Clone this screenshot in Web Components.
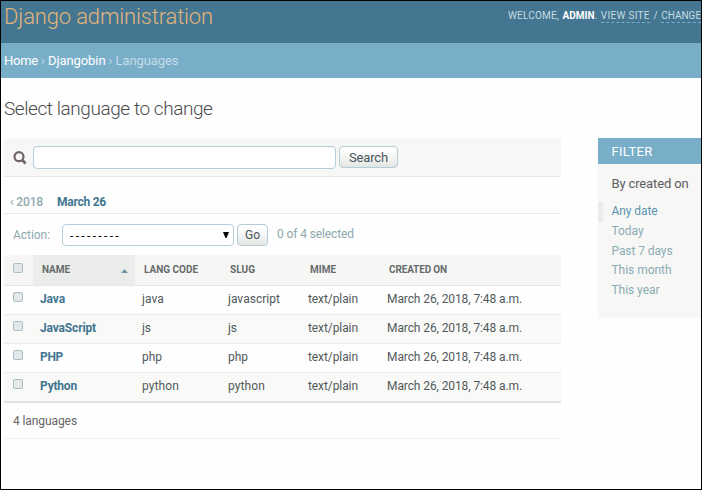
<!DOCTYPE html>
<html lang="en"><head><meta charset="utf-8"><title>Select language to change</title>
<style>
body{margin:0;width:702px;height:490px;overflow:hidden;font-family:Roboto,"Liberation Sans",sans-serif}
</style></head><body><admin-page></admin-page>
<script>
// Inline text whose tracking is adjusted so that it spans the width given in "w".
class FitText extends HTMLElement{
  connectedCallback(){
    const r=this.attachShadow({mode:'open'});
    r.innerHTML='<style>:host{display:inline-block;white-space:pre}</style><slot></slot>';
    const w=+this.getAttribute('w'),n=this.textContent.length;
    this.style.letterSpacing='0px';
    const natural=this.getBoundingClientRect().width;
    if(w&&natural)this.style.letterSpacing=((w-natural)/n).toFixed(3)+'px';
  }
}
function define(name,html,after){
  customElements.define(name,class extends HTMLElement{
    connectedCallback(){
      if(this.shadowRoot)return;
      const r=this.attachShadow({mode:'open'});
      r.innerHTML='<style>*{box-sizing:border-box}'+html;
      if(after)after(this,r);
    }
  });
}
define('admin-header',`:host{display:flex;justify-content:space-between;height:42px;flex:none;background:#447691;color:#e0b47a;overflow:hidden;padding-left:3px}
.t{font-weight:300;font-size:22px;line-height:26px;padding-top:3px}
.u{display:flex;gap:3.6px;width:193px;flex:none;font-size:10px;line-height:13px;padding-top:8px;color:#c5dbe2;white-space:nowrap}
b{color:#fff;font-weight:700}.l{border-bottom:1px dashed #79aec8;height:14px}</style>
<div class="t"><fit-text w="209">Django administration</fit-text></div>
<div class="u"><fit-text w="51">WELCOME,</fit-text><span><b><fit-text w="32">ADMIN</fit-text></b>.</span><span class="l"><fit-text w="49">VIEW SITE</fit-text></span><span>/</span><span class="l"><fit-text w="40">CHANGE</fit-text></span></div>`);
define('bread-crumbs',`:host{display:flex;height:35px;flex:none;background:#79aec8;color:#c4dce8;padding:9px 0 0 3px;font-size:13px;line-height:17px}
a{color:#fff}i{font-style:normal;width:10px;text-align:center}</style>
<a><fit-text w="34">Home</fit-text></a><i>›</i><a><fit-text w="57.5">Djangobin</fit-text></a><i>›</i><fit-text w="63">Languages</fit-text>`);
define('push-button',`:host{display:block;border:1px solid #b4cdd9;border-radius:4px;height:22px;background:linear-gradient(#fff 15%,#e3e7e4);color:#4b5559;text-align:center;line-height:20px;box-sizing:border-box}</style><slot></slot>`);
define('search-bar',`:host{display:flex;height:39px;background:#f7f7f6;border-bottom:1px solid #e8e9e7;padding:8px 0 0 9px}
svg{margin:5px 6px 0 0;flex:none}.i{width:303px;height:23px;border:1px solid #b4cdd9;border-radius:4px;background:#fff;margin-right:3px}
push-button{width:59px;font-size:13px;line-height:22px}</style>
<svg width="14" height="14" viewBox="0 0 14 14" fill="none" stroke="#70656a" stroke-width="2.2"><circle cx="6" cy="5.7" r="4.5"/><path d="M9.2 9L12.6 12.4" stroke-width="2.8"/></svg><div class="i"></div><push-button><fit-text w="39">Search</fit-text></push-button>`);
define('date-nav',`:host{display:flex;height:37px;border-bottom:1px solid #e8e9e7;font-size:12px;line-height:16px;padding:17px 0 0 6px;color:#8da9ad;font-weight:500}
b{font-weight:700;color:#417690;margin-left:14px}</style><fit-text w="33">‹ 2018</fit-text><b><fit-text w="49">March 26</fit-text></b>`);
define('action-bar',`:host{display:flex;height:41px;padding:10px 0 0 9px;font-size:12px;line-height:22px;color:#8da9ad}
.s{margin-left:12px;width:172px;height:22px;border:1px solid #b4cdd9;border-radius:4px;display:flex;justify-content:space-between;padding:0 4px 0 7px;color:#000;line-height:23px;background:#fff}
svg{margin-top:7px}push-button{width:31px;margin:0 9px 0 3px;line-height:21px}.c{margin-top:-1px}</style>
<fit-text w="37">Action:</fit-text><div class="s"><fit-text w="51">---------</fit-text><svg width="6" height="7"><path d="M0 0H6L3.5 6H2.5Z"/></svg></div><push-button><fit-text w="15">Go</fit-text></push-button><div class="c"><fit-text w="77">0 of 4 selected</fit-text></div>`);
const COLS='29px 102px 86px 80px 79px 1fr';
define('table-row',`:host{display:grid;grid-template-columns:${COLS};height:29px;font-size:12px;line-height:15px;color:#52595b;box-sizing:border-box;border-bottom:1px solid #eaebe9;background:#fefefe}
:host([alt]){background:#f9f9f8}
i{width:10px;height:10px;margin:6px 0 0 9px;border:1px solid #a9bdc4;border-radius:2px;background:#e4e8e8}
span,b{padding:6px 0 0 7px}b{color:#417690}</style><i></i><b></b><span></span><span></span><span></span><span></span>`,(h,r)=>{
  const cells=[...r.children].slice(2),t=h.getAttribute('cells').split('|'),w=h.getAttribute('widths').split(',');
  cells.forEach((c,k)=>{c.innerHTML='<fit-text w="'+w[k]+'">'+t[k]+'</fit-text>';});
});
define('table-head',`:host{display:grid;grid-template-columns:${COLS};height:31px;font-size:10px;line-height:13px;font-weight:700;color:#666c6d;background:#f6f6f5;border-bottom:1px solid #e8e9e7;box-sizing:border-box}
i{width:10px;height:10px;margin:8px 0 0 9px;border:1px solid #a9bdc4;border-radius:2px;background:#e4e8e8}
span{padding:8px 0 0 9px}.n{background:#eaede9;display:flex;justify-content:space-between;padding-right:7px}svg{margin-top:6px}</style>
<i></i><span class="n"><fit-text w="28">NAME</fit-text><svg width="7" height="4"><path d="M0 4L3.5 0L7 4Z" fill="#7197a5"/></svg></span><span><fit-text w="54">LANG CODE</fit-text></span><span><fit-text w="25">SLUG</fit-text></span><span><fit-text w="26">MIME</fit-text></span><span><fit-text w="58">CREATED ON</fit-text></span>`);
define('result-list',`:host{display:block}.p{height:38px;border-top:2px solid #dee4e3;border-bottom:1px solid #f0f1f0;font-size:12px;line-height:15px;padding:11px 0 0 9px;color:#666}
table-row:last-of-type{border-bottom:0;height:28px}</style>
<table-head></table-head>
<table-row cells="Java|java|javascript|text/plain|March 26, 2018, 7:48 a.m." widths="25,22,52,50,135"></table-row>
<table-row alt cells="JavaScript|js|js|text/plain|March 26, 2018, 7:48 a.m." widths="56,9,9,50,135"></table-row>
<table-row cells="PHP|php|php|text/plain|March 26, 2018, 7:48 a.m." widths="23,20,20,50,135"></table-row>
<table-row alt cells="Python|python|python|text/plain|March 26, 2018, 7:48 a.m." widths="37,37,37,50,135"></table-row>
<div class="p"><fit-text w="64">4 languages</fit-text></div>`);
define('filter-panel',`:host{display:block;width:103px;height:180px;flex:none;background:#f7f7f6;overflow:hidden}
h2{margin:0;height:26px;background:#79aec8;color:#fff;font-weight:400;font-size:13px;line-height:27px;padding-left:13.5px}
h3{margin:12px 0 10px 13.5px;font-weight:400;font-size:13px;line-height:16px;color:#5b5e5f}
ul{margin:0;padding:0;list-style:none;font-size:12px;color:#8bacb4}
li{height:19.8px;line-height:18px;padding-left:13.5px}li.s{color:#5b93b0;padding-left:8.5px;border-left:5px solid #eaede9}</style>
<h2><fit-text w="41">FILTER</fit-text></h2><h3><fit-text w="77">By created on</fit-text></h3>
<ul><li class="s"><fit-text w="46">Any date</fit-text></li><li><fit-text w="32">Today</fit-text></li><li><fit-text w="61">Past 7 days</fit-text></li><li><fit-text w="60">This month</fit-text></li><li><fit-text w="48">This year</fit-text></li></ul>`);
define('admin-page',`:host{display:flex;flex-direction:column;box-sizing:border-box;width:702px;height:490px;border:1px solid #000;background:#fefefe;overflow:hidden}
h1{margin:0;height:60px;padding:19px 0 0 3px;font-weight:300;font-size:19px;line-height:24px;color:#4c4c4c;flex:none}
main{display:flex;justify-content:space-between;padding-left:3px}section{width:557px}</style>
<admin-header></admin-header><bread-crumbs></bread-crumbs><h1><fit-text w="208.5">Select language to change</fit-text></h1>
<main><section><search-bar></search-bar><date-nav></date-nav><action-bar></action-bar><result-list></result-list></section><filter-panel></filter-panel></main>`);
customElements.define('fit-text',FitText);
</script></body></html>
